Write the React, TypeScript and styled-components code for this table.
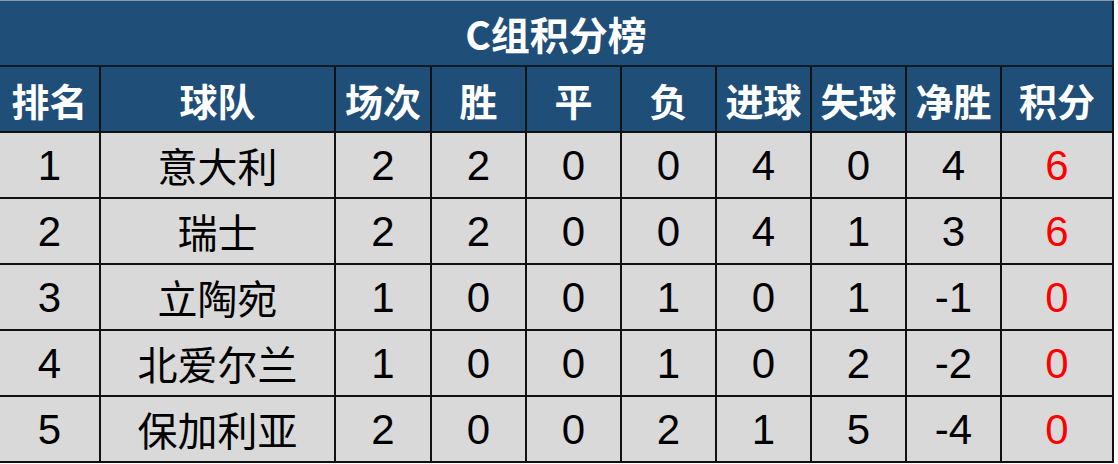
import React from 'react';
import styled, { createGlobalStyle } from 'styled-components';

const GlobalStyle = createGlobalStyle`
    html, body {
        margin: 0;
        padding: 0;
        background: #ffffff;
    }
    * {
        box-sizing: border-box;
    }
`;

const COLS = '101px 235px 96px 95px 95px 95px 95px 95px 95px 112px';

const Board = styled.div`
    width: 1114px;
    border-top: 1px solid #8a9aa8;
    font-family: 'Liberation Sans', 'Noto Sans CJK SC', sans-serif;
`;

const Title = styled.div`
    height: 66px;
    background: #1f4e79;
    color: #ffffff;
    font-family: 'Noto Sans CJK SC', sans-serif;
    font-weight: 700;
    font-size: 39px;
    display: flex;
    align-items: center;
    justify-content: center;
    border-bottom: 2px solid #0d1b26;
    border-right: 2px solid #0d1b26;
`;

const Row = styled.div<{ head?: boolean }>`
    display: grid;
    grid-template-columns: ${COLS};
    height: 66px;
    background: ${(p) => (p.head ? '#1f4e79' : '#d9d9d9')};
`;

const Cell = styled.div<{ head?: boolean; name?: boolean; red?: boolean }>`
    display: flex;
    align-items: center;
    justify-content: center;
    border-right: 2px solid #111111;
    border-bottom: 2px solid #111111;
    color: ${(p) => (p.head ? '#ffffff' : p.red ? '#ff0000' : '#000000')};
    font-family: ${(p) =>
        p.head || p.name ? "'Noto Sans CJK SC', sans-serif" : "'Liberation Sans', sans-serif"};
    font-weight: ${(p) => (p.head ? 700 : 400)};
    font-size: ${(p) => (p.head ? '38px' : p.name ? '40px' : '42px')};
    padding-top: ${(p) => (p.head || p.name ? '0' : '2px')};
    white-space: nowrap;
`;

const headers = ['排名', '球队', '场次', '胜', '平', '负', '进球', '失球', '净胜', '积分'];

const teams = [
    { rank: 1, name: '意大利', p: 2, w: 2, d: 0, l: 0, gf: 4, ga: 0, gd: '4', pts: 6 },
    { rank: 2, name: '瑞士', p: 2, w: 2, d: 0, l: 0, gf: 4, ga: 1, gd: '3', pts: 6 },
    { rank: 3, name: '立陶宛', p: 1, w: 0, d: 0, l: 1, gf: 0, ga: 1, gd: '-1', pts: 0 },
    { rank: 4, name: '北爱尔兰', p: 1, w: 0, d: 0, l: 1, gf: 0, ga: 2, gd: '-2', pts: 0 },
    { rank: 5, name: '保加利亚', p: 2, w: 0, d: 0, l: 2, gf: 1, ga: 5, gd: '-4', pts: 0 },
];

const App: React.FC = () => {
    return (
        <>
            <GlobalStyle />
            <Board>
                <Title>C组积分榜</Title>
                <Row head>
                    {headers.map((h) => (
                        <Cell head key={h}>
                            {h}
                        </Cell>
                    ))}
                </Row>
                {teams.map((t) => (
                    <Row key={t.rank}>
                        <Cell>{t.rank}</Cell>
                        <Cell name>{t.name}</Cell>
                        <Cell>{t.p}</Cell>
                        <Cell>{t.w}</Cell>
                        <Cell>{t.d}</Cell>
                        <Cell>{t.l}</Cell>
                        <Cell>{t.gf}</Cell>
                        <Cell>{t.ga}</Cell>
                        <Cell>{t.gd}</Cell>
                        <Cell red>{t.pts}</Cell>
                    </Row>
                ))}
            </Board>
        </>
    );
};

export default App;
